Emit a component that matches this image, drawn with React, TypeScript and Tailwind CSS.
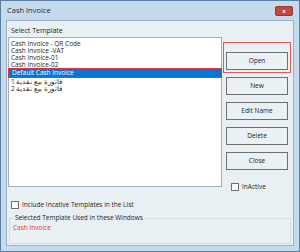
import React from 'react';

const templates = [
  'Cash Invoice - QR Code',
  'Cash Invoice -VAT',
  'Cash Invoice-01',
  'Cash Invoice-02',
  'Default Cash Invoice',
  '1 فاتورة بيع نقدية',
  '2 فاتورة بيع نقدية',
];

const buttons = ['Open', 'New', 'Edit Name', 'Delete', 'Close'];

const App: React.FC = () => {
  return (
    <div
      className="w-[300px] h-[252px] flex flex-col bg-[#c6daee] border border-[#5b7fa3] text-[#1e1e1e]"
      style={{ fontFamily: '"Open Sans", "Noto Sans", sans-serif' }}
    >
      {/* title bar */}
      <div className="h-[19px] flex items-center justify-between pl-[6px] pr-[6px]">
        <span className="text-[7.5px] leading-none text-[#2a2a2a]">Cash Invoice</span>
        <div className="w-[18px] h-[10px] mt-[1px] rounded-[2px] bg-[#c9443a] border border-[#8c3a34] flex items-center justify-center">
          <span className="text-white text-[7px] leading-none font-bold">×</span>
        </div>
      </div>

      {/* client area */}
      <div className="flex-1 mx-[5px] mb-[5px] border border-[#9ab3cb] bg-[#e8f0f4] px-[1px] flex flex-col">
        <div className="text-[7px] leading-none mt-[6px] ml-[3px]">Select Template</div>

        <div className="flex mt-[3px]">
          {/* list */}
          <div className="w-[214px] h-[150px] bg-white border border-[#abadb3] pt-[2px]">
            {templates.map((t, i) =>
              i === 4 ? (
                <div
                  key={t}
                  className="h-[10px] mx-[-1px] border border-[#e8342f] bg-[#0a74d6] text-white text-[6.5px] leading-[8px] pl-[3px]"
                >
                  {t}
                </div>
              ) : (
                <div key={t} className="h-[7px] text-[6.5px] leading-[7px] pl-[2px] whitespace-nowrap">
                  {t}
                </div>
              )
            )}
          </div>

          {/* buttons */}
          <div className="flex flex-col ml-[1px] pt-[5px]">
            <div className="w-[68px] border border-[#e55a55] p-[2px]">
              <button className="w-[62px] h-[18px] bg-[#e9f1f5] border border-[#707070] text-[6.5px] leading-none">
                {buttons[0]}
              </button>
            </div>
            <div className="flex flex-col gap-[7px] mt-[4px] pl-[3px]">
              {buttons.slice(1).map((b) => (
                <button
                  key={b}
                  className="w-[62px] h-[18px] bg-[#e9f1f5] border border-[#707070] text-[6.5px] leading-none"
                >
                  {b}
                </button>
              ))}
            </div>
            <div className="flex items-center mt-[13px] ml-[8px]">
              <div className="w-[8px] h-[8px] bg-white border border-[#707070]" />
              <span className="text-[6.5px] leading-none ml-[3px]">InActive</span>
            </div>
          </div>
        </div>

        <div className="flex items-center mt-[10px] ml-[3px]">
          <div className="w-[8px] h-[8px] bg-white border border-[#707070]" />
          <span className="text-[6.5px] leading-none ml-[3px]">Include Incative Templates in the List</span>
        </div>

        <div className="relative mt-[9px] mx-[1px] h-[26px] border border-[#d5dde3]">
          <span className="absolute -top-[4px] left-[4px] px-[1px] bg-[#e8f0f4] text-[6.5px] leading-none">
            Selected Template Used in these Windows
          </span>
          <div className="text-[6.5px] leading-none text-[#e8342f] mt-[6px] ml-[3px]">Cash Invoice</div>
        </div>
      </div>
    </div>
  );
};

export default App;
